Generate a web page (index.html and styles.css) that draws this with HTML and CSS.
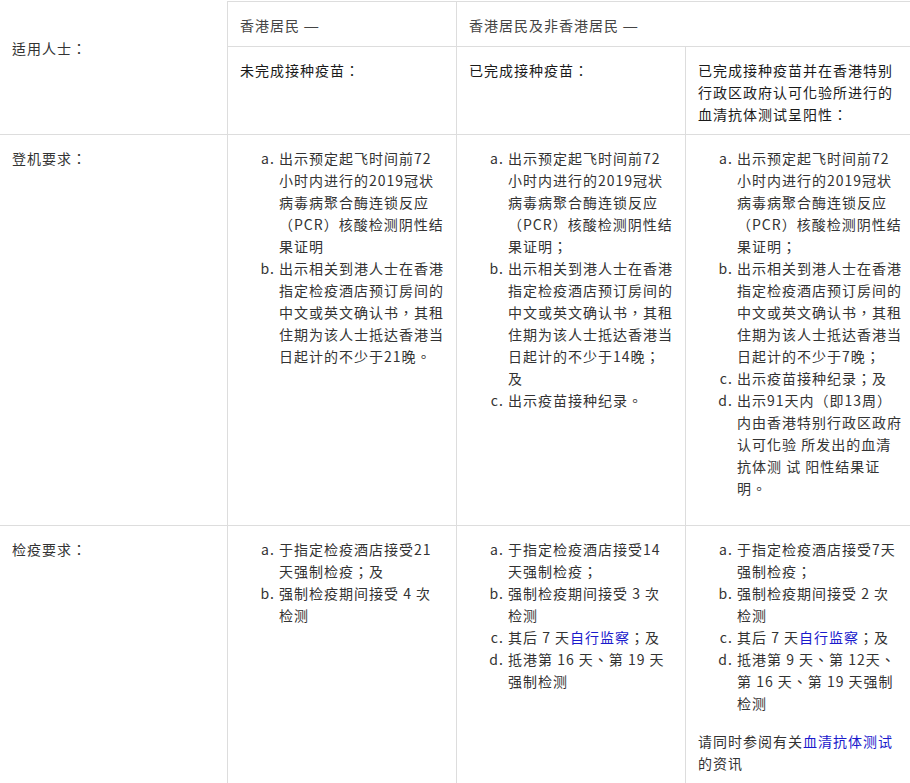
FILE: index.html
```html
<!DOCTYPE html>
<html>
<head>
<meta charset="utf-8">
<title>入境要求</title>
<link rel="stylesheet" href="styles.css">
</head>
<body>
<table class="req">
  <colgroup>
    <col class="c1"><col class="c2"><col class="c3"><col class="c4">
  </colgroup>
  <tbody>
    <tr class="row-group">
      <th rowspan="2" class="label label-top">适用人士：</th>
      <th class="group">香港居民 <span class="dash">—</span></th>
      <th colspan="2" class="group">香港居民及非香港居民 <span class="dash">—</span></th>
    </tr>
    <tr class="row-sub">
      <th class="sub">未完成接种疫苗：</th>
      <th class="sub">已完成接种疫苗：</th>
      <th class="sub">已完成接种疫苗并在香港特别行政区政府认可化验所进行的血清抗体测试呈阳性：</th>
    </tr>
    <tr>
      <th class="label">登机要求：</th>
      <td>
        <ol class="steps">
          <li>出示预定起飞时间前72小时内进行的2019冠状病毒病聚合酶连锁反应（PCR）核酸检测阴性结果证明</li>
          <li>出示相关到港人士在香港指定检疫酒店预订房间的中文或英文确认书，其租住期为该人士抵达香港当日起计的不少于21晚。</li>
        </ol>
      </td>
      <td>
        <ol class="steps">
          <li>出示预定起飞时间前72小时内进行的2019冠状病毒病聚合酶连锁反应（PCR）核酸检测阴性结果证明；</li>
          <li>出示相关到港人士在香港指定检疫酒店预订房间的中文或英文确认书，其租住期为该人士抵达香港当日起计的不少于14晚；及</li>
          <li>出示疫苗接种纪录。</li>
        </ol>
      </td>
      <td>
        <ol class="steps">
          <li>出示预定起飞时间前72小时内进行的2019冠状病毒病聚合酶连锁反应（PCR）核酸检测阴性结果证明；</li>
          <li>出示相关到港人士在香港指定检疫酒店预订房间的中文或英文确认书，其租住期为该人士抵达香港当日起计的不少于7晚；</li>
          <li>出示疫苗接种纪录；及</li>
          <li>出示91天内（即13周）内由香港特别行政区政府认可化验 所发出的血清抗体测 试 阳性结果证明。</li>
        </ol>
      </td>
    </tr>
    <tr>
      <th class="label">检疫要求：</th>
      <td>
        <ol class="steps">
          <li>于指定检疫酒店接受21天强制检疫；及</li>
          <li>强制检疫期间接受 4 次检测</li>
        </ol>
      </td>
      <td>
        <ol class="steps">
          <li>于指定检疫酒店接受14天强制检疫；</li>
          <li>强制检疫期间接受 3 次检测</li>
          <li>其后 7 天<a href="#">自行监察</a>；及</li>
          <li>抵港第 16 天、第 19 天强制检测</li>
        </ol>
      </td>
      <td>
        <ol class="steps">
          <li>于指定检疫酒店接受7天强制检疫；</li>
          <li>强制检疫期间接受 2 次检测</li>
          <li>其后 7 天<a href="#">自行监察</a>；及</li>
          <li>抵港第 9 天、第 12天、第 16 天、第 19 天强制检测</li>
        </ol>
        <p class="note">请同时参阅有关<a href="#">血清抗体测试</a>的资讯</p>
      </td>
    </tr>
  </tbody>
</table>
</body>
</html>
```

FILE: styles.css
```css
html, body {
  margin: 0;
  padding: 0;
  overflow: hidden;
  background: #ffffff;
}

body {
  font-family: "Noto Sans CJK TC", "Noto Sans CJK SC", "Noto Sans", sans-serif;
  font-size: 14px;
  line-height: 22px;
  letter-spacing: 1px;
  color: #333333;
}

.req {
  border-collapse: collapse;
  table-layout: fixed;
  width: 915px;
  margin: 1px 0 0 -1px;
}

.c1 { width: 228px; }
.c2 { width: 229px; }
.c3 { width: 229px; }
.c4 { width: 229px; }

.req th,
.req td {
  border: 1px solid #dddddd;
  vertical-align: top;
  text-align: left;
  font-weight: normal;
  padding: 12px 9px 11px 12px;
}

.req .label-top {
  border-top: none;
  padding-top: 35px;
}

.req .group {
  color: #444444;
  padding: 12px 12px 10px 12px;
}

.dash {
  font-family: "Liberation Sans", Arial, sans-serif;
  letter-spacing: 0;
  line-height: 1;
}

.req .sub {
  color: #1a1a1a;
  padding: 12px 9px 9px 12px;
}

.steps {
  list-style: lower-alpha;
  margin: 0 0 15px 0;
  padding: 0 2px 0 39px;
}

.note {
  margin: 16px 0 0 0;
}

a {
  color: #1a1acc;
  text-decoration: none;
}
```
